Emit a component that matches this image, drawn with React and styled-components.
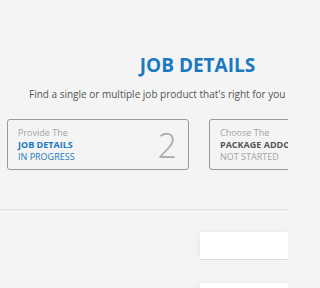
import React from "react";
import styled, { createGlobalStyle } from "styled-components";

const GlobalStyle = createGlobalStyle`
  html, body {
    margin: 0;
    padding: 0;
    background: #f4f4f4;
    overflow: hidden;
    font-family: "Open Sans", "Liberation Sans", sans-serif;
  }
`;

const steps = [
  { lead: "Provide The", name: "JOB DETAILS", status: "IN PROGRESS", num: 2, active: true },
  { lead: "Choose The", name: "PACKAGE ADDONS", status: "NOT STARTED", num: 3, active: false },
];

const App = () => {
  return (
    <Page>
      <GlobalStyle />
      <Top>
        <Title>JOB DETAILS</Title>
        <Subtitle>Find a single or multiple job product that's right for you</Subtitle>
        <Steps>
          {steps.map((s) => (
            <Step key={s.name}>
              <StepText>
                <Lead>{s.lead}</Lead>
                <StepName active={s.active}>{s.name}</StepName>
                <Status active={s.active}>{s.status}</Status>
              </StepText>
              <Num>{s.num}</Num>
            </Step>
          ))}
        </Steps>
      </Top>
      <Form>
        <Field />
        <Field />
      </Form>
    </Page>
  );
};

const Page = styled.div`
  width: 288px;
  height: 288px;
  overflow: hidden;
`;

const Top = styled.section`
  width: 395px;
  padding: 53px 0 39px;
  border-bottom: 2px solid #e8e8e8;
  box-shadow: 0 2px 0 #f9f9f9;
`;

const Title = styled.h1`
  margin: 0;
  text-align: center;
  font-size: 19px;
  line-height: 24px;
  font-weight: 700;
  color: #1b78c2;
`;

const Subtitle = styled.p`
  margin: 9px 0 0 29px;
  font-size: 10px;
  line-height: 16px;
  color: #555;
  white-space: nowrap;
`;

const Steps = styled.div`
  display: flex;
  gap: 20px;
  margin-top: 17px;
  padding-left: 7px;
`;

const Step = styled.div`
  flex: 0 0 182px;
  box-sizing: border-box;
  height: 51px;
  border: 1px solid #9a9a9a;
  border-radius: 3px;
  padding: 0 11px 0 10px;
  display: flex;
  align-items: center;
  justify-content: space-between;
  overflow: hidden;
`;

const StepText = styled.div`
  font-size: 9px;
  line-height: 12px;
  white-space: nowrap;
`;

const Lead = styled.div`
  color: #a4a4a4;
`;

const StepName = styled.div`
  font-weight: 700;
  color: ${({ active }) => (active ? "#1b78c2" : "#555")};
`;

const Status = styled.div`
  color: ${({ active }) => (active ? "#1b78c2" : "#a4a4a4")};
`;

const Num = styled.div`
  font-size: 34px;
  font-weight: 300;
  line-height: 34px;
  color: #aaa;
`;

const Form = styled.section`
  padding: 21px 0 0 200px;
  display: flex;
  flex-direction: column;
  gap: 23px;
`;

const Field = styled.div`
  height: 27px;
  background: #fff;
  border-bottom: 1px solid #ddd;
  box-shadow: -4px 0 6px -3px #e6e6e6, 0 -2px 3px -1px #ececec;
`;

export default App;
